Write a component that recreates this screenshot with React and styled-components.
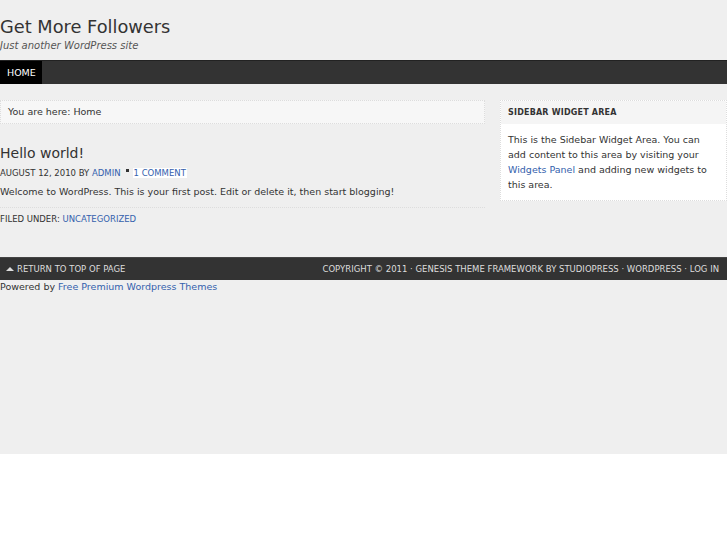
import React from "react";
import styled, { createGlobalStyle } from "styled-components";

const GlobalStyle = createGlobalStyle`
  html, body {
    margin: 0;
    padding: 0;
    background: #fff;
  }
  body {
    font-family: "DejaVu Sans", Verdana, sans-serif;
    color: #333;
  }
  a {
    color: #3461ad;
    text-decoration: none;
  }
`;

const Page = styled.div`
  background: #efefef;
  height: 454px;
`;

const Header = styled.header`
  padding: 16px 0 0;
  height: 60px;
  box-sizing: border-box;
  .title {
    margin: 0;
    font-size: 17.8px;
    font-weight: normal;
    line-height: 22px;
    color: #333;
  }
  .tagline {
    margin: 2px 0 0;
    font-size: 10px;
    font-style: italic;
    color: #555;
  }
`;

const Nav = styled.nav`
  background: #333;
  height: 23px;
  border-top: 1px solid #222;
  display: flex;
  ul {
    list-style: none;
    margin: 0;
    padding: 0;
    display: flex;
  }
  li {
    background: #000;
    color: #fff;
    font-size: 9.5px;
    padding: 0 7px;
    width: 28px;
    line-height: 23px;
    text-transform: uppercase;
  }
`;

const Wrap = styled.div`
  display: flex;
  justify-content: space-between;
  padding-top: 16px;
`;

const Content = styled.main`
  width: 485px;
`;

const Breadcrumb = styled.div`
  background: #f7f7f7;
  border: 1px dotted #ddd;
  height: 24px;
  box-sizing: border-box;
  padding: 0 7px;
  line-height: 22px;
  font-size: 9.5px;
  color: #333;
`;

const Post = styled.article`
  padding-top: 20px;
  h2 {
    margin: 0;
    font-size: 14px;
    font-weight: normal;
    line-height: 18px;
    color: #333;
  }
`;

const Meta = styled.div`
  font-size: 8.5px;
  text-transform: uppercase;
  color: #333;
  line-height: 12px;
  margin-top: 5px;
  .comments {
    background: #fff;
    padding: 0 1px;
  }
  .dot {
    display: inline-block;
    width: 3px;
    height: 3px;
    background: #333;
    margin: 0 4px 0 5px;
    vertical-align: 4px;
  }
`;

const Body = styled.p`
  margin: 5px 0 0;
  font-size: 9.5px;
  line-height: 15px;
  color: #333;
  padding-bottom: 8px;
  border-bottom: 1px dotted #ddd;
`;

const Filed = styled.div`
  font-size: 8.5px;
  text-transform: uppercase;
  line-height: 12px;
  margin-top: 5px;
`;

const Sidebar = styled.aside`
  width: 227px;
  background: #fff;
  border: 1px dotted #ddd;
  box-sizing: border-box;
  align-self: flex-start;
  h4 {
    margin: 0;
    background: #f5f5f5;
    font-size: 8px;
    font-weight: bold;
    text-transform: uppercase;
    letter-spacing: 0.2px;
    line-height: 23px;
    padding: 0 7px;
    color: #333;
  }
  p {
    margin: 0;
    padding: 8px 7px 8px;
    font-size: 9.5px;
    line-height: 15px;
    color: #333;
  }
`;

const Footer = styled.footer`
  margin-top: 32px;
  background: #333;
  border-top: 1px solid #444;
  height: 22px;
  display: flex;
  justify-content: space-between;
  align-items: center;
  padding: 0 8px 0 6px;
  font-size: 8.5px;
  text-transform: uppercase;
  color: #ddd;
  .top {
    display: flex;
    align-items: center;
    gap: 3px;
  }
`;

const Powered = styled.div`
  font-size: 9.5px;
  line-height: 14px;
  padding-top: 0;
  color: #333;
`;

export default function App() {
  return (
    <>
      <GlobalStyle />
      <Page>
        <Header>
          <h1 className="title">Get More Followers</h1>
          <p className="tagline">Just another WordPress site</p>
        </Header>
        <Nav>
          <ul>
            <li>Home</li>
          </ul>
        </Nav>
        <Wrap>
          <Content>
            <Breadcrumb>You are here: Home</Breadcrumb>
            <Post>
              <h2>Hello world!</h2>
              <Meta>
                August 12, 2010 by <a href="#">admin</a>
                <span className="dot" />
                <a className="comments" href="#">1 Comment</a>
              </Meta>
              <Body>Welcome to WordPress. This is your first post. Edit or delete it, then start blogging!</Body>
              <Filed>
                Filed Under: <a href="#">Uncategorized</a>
              </Filed>
            </Post>
          </Content>
          <Sidebar>
            <h4>Sidebar Widget Area</h4>
            <p>
              This is the Sidebar Widget Area. You can add content to this area by visiting your{" "}
              <a href="#">Widgets Panel</a> and adding new widgets to this area.
            </p>
          </Sidebar>
        </Wrap>
        <Footer>
          <div className="top">
            <svg width="8" height="6" viewBox="0 0 8 6">
              <path d="M0 5 L4 1 L8 5 Z" fill="#ddd" />
            </svg>
            Return to top of page
          </div>
          <div>Copyright © 2011 · Genesis Theme Framework by StudioPress · WordPress · Log in</div>
        </Footer>
        <Powered>
          Powered by <a href="#">Free Premium Wordpress Themes</a>
        </Powered>
      </Page>
    </>
  );
}
